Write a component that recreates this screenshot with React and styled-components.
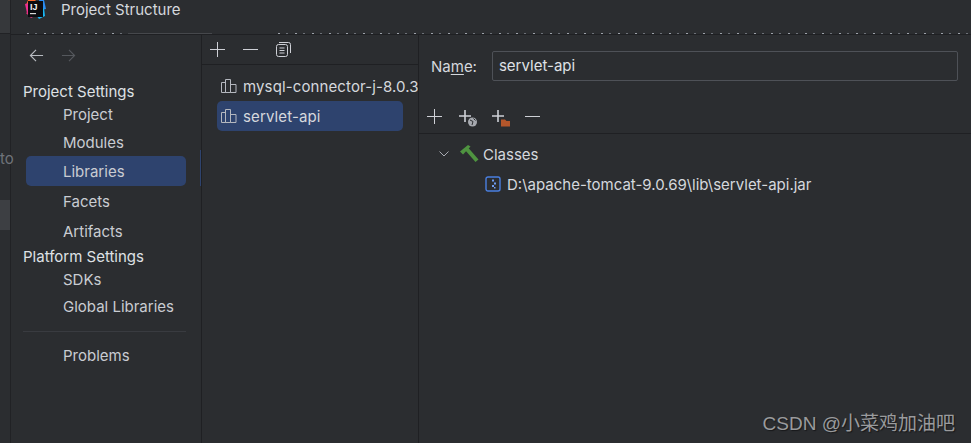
import React from 'react'
import styled, { createGlobalStyle } from 'styled-components'

const Global = createGlobalStyle`
  html, body { margin: 0; padding: 0; background: #2b2d30; }
  * { box-sizing: border-box; }
`

const Page = styled.div`
  position: relative;
  width: 971px;
  height: 443px;
  display: flex;
  overflow: hidden;
  background: #2b2d30;
  color: #dfe1e5;
  font-family: Inter, "Noto Sans", sans-serif;
  font-size: 15px;
`

const BehindStrip = styled.div`
  width: 11px;
  flex: none;
  display: flex;
  flex-direction: column;
  background: #2b2d30;
  border-right: 1px solid #212225;
`
const StripTop = styled.div`
  height: 34px;
  background: #36383b;
  border-bottom: 1px solid #212225;
`
const StripHint = styled.div`
  margin-top: 115px;
  height: 20px;
  line-height: 20px;
  color: #6f737a;
  white-space: nowrap;
`
const StripBlock = styled.div`
  margin-top: 31px;
  height: 30px;
  background: #3d3f43;
`

const Dialog = styled.div`
  flex: 1;
  display: flex;
  flex-direction: column;
  min-width: 0;
`

const TitleBar = styled.div`
  height: 35px;
  flex: none;
  display: flex;
  align-items: flex-start;
  gap: 15px;
  padding: 0 0 0 14px;
  border-bottom: 1px solid #1f2023;
  position: relative;
`
const TitleText = styled.div`
  line-height: 20px;
  color: #d5d8dd;
`
const ClippedRow = styled.div`
  position: absolute;
  left: ${({ $left }) => $left}px;
  right: ${({ $right }) => $right}px;
  bottom: 0;
  height: 1px;
  background: repeating-linear-gradient(90deg, #9da2aa 0 2px, #2b2d30 2px 8px, #6d7178 8px 10px, #2b2d30 10px 17px);
`
const ClippedBar = styled.div`
  position: absolute;
  left: 40px;
  width: 161px;
  bottom: 0;
  height: 1px;
  background: #46484c;
`

const Body = styled.div`
  flex: 1;
  display: flex;
  min-height: 0;
`

const Sidebar = styled.div`
  width: 191px;
  flex: none;
  display: flex;
  flex-direction: column;
  padding: 0 15px;
  border-right: 1px solid #1f2023;
`
const NavArrows = styled.div`
  height: 40px;
  display: flex;
  align-items: center;
  gap: 17px;
  padding: 0 0 0 3px;
`
const GroupTitle = styled.div`
  height: ${({ $h }) => $h}px;
  line-height: ${({ $h }) => $h}px;
  margin-left: -3px;
  color: #dfe1e5;
  white-space: nowrap;
`
const NavItem = styled.div`
  position: relative;
  height: ${({ $h }) => $h || 30}px;
  line-height: ${({ $h }) => $h || 32}px;
  margin-top: ${({ $top }) => $top || 0}px;
  padding-left: 37px;
  border-radius: 5px;
  color: #c9ccd2;
  background: ${({ $active }) => ($active ? '#2e436e' : 'transparent')};

  ${({ $active }) =>
    $active &&
    `&::after {
      content: '';
      position: absolute;
      top: -6px;
      right: -15px;
      width: 1px;
      height: 36px;
      background: #2e436e;
    }`}
`
const NavSep = styled.div`
  height: 1px;
  margin: 9px 0 8px -3px;
  background: #393b40;
`

const Middle = styled.div`
  width: 217px;
  flex: none;
  display: flex;
  flex-direction: column;
  border-right: 1px solid #1f2023;
  overflow: hidden;
`
const Toolbar = styled.div`
  height: ${({ $h }) => $h}px;
  flex: none;
  display: flex;
  align-items: center;
  gap: ${({ $gap }) => $gap}px;
  padding-left: ${({ $pad }) => $pad}px;
  border-bottom: 1px solid #1f2023;

  & svg { flex: none; }
`
const LibList = styled.div`
  display: flex;
  flex-direction: column;
  padding: 6px 15px 0;
`
const LibRow = styled.div`
  height: 30px;
  width: 186px;
  display: flex;
  align-items: center;
  gap: 6px;
  padding-left: 4px;
  border-radius: 5px;
  white-space: nowrap;
  letter-spacing: 0.12px;
  color: #d5d8dd;
  background: ${({ $active }) => ($active ? '#2e436e' : 'transparent')};

  & svg { flex: none; }
`

const Detail = styled.div`
  flex: 1;
  display: flex;
  flex-direction: column;
  min-width: 0;
`
const NameRow = styled.div`
  height: 64px;
  display: flex;
  align-items: center;
  gap: 15px;
  padding: 0 0 2px 12px;
`
const NameLabel = styled.label`
  color: #d5d8dd;
  & u { text-underline-offset: 2px; }
`
const NameInput = styled.div`
  width: 466px;
  height: 30px;
  line-height: 27px;
  padding: 0 6px;
  border: 1px solid #4e5157;
  border-radius: 2px;
  color: #dfe1e5;
`
const Tree = styled.div`
  display: flex;
  flex-direction: column;
  padding-top: 5px;
`
const TreeRow = styled.div`
  height: 30px;
  display: flex;
  align-items: center;
  gap: ${({ $gap }) => $gap}px;
  padding-left: ${({ $pad }) => $pad}px;
  color: #d5d8dd;
`
const Watermark = styled.div`
  position: absolute;
  right: 16px;
  bottom: 8px;
  font-family: "Liberation Sans", "Noto Sans CJK SC", sans-serif;
  font-size: 19px;
  line-height: 22px;
  color: #9a9b9d;
  text-shadow: 1px 1px 1px #17181a;
`

const Stroke = ({ size = 16, color = '#ced0d6', children, ...rest }) => (
  <svg width={size} height={size} viewBox="0 0 16 16" fill="none" stroke={color} strokeWidth="1" {...rest}>
    {children}
  </svg>
)

const Plus = () => (
  <Stroke size={17} viewBox="0 0 17 17">
    <path d="M8.5 1v15M1 8.5h15" />
  </Stroke>
)
const Minus = () => (
  <Stroke size={17} viewBox="0 0 17 17">
    <path d="M1 8.5h15" />
  </Stroke>
)
const CopyIcon = () => (
  <Stroke size={17} viewBox="0 0 17 17">
    <rect x="1.5" y="3.5" width="11" height="12" rx="2" />
    <path d="M4 1.5h9.5a2 2 0 0 1 2 2V12" />
    <path d="M4.5 7h5M4.5 9.5h5M4.5 12h5" />
  </Stroke>
)
const BackArrow = ({ color, flip }) => (
  <Stroke size={15} color={color} strokeWidth="1.2" style={flip ? { transform: 'scaleX(-1)' } : undefined}>
    <path d="M15 8H1.5M7.5 2L1.5 8l6 6" />
  </Stroke>
)
const LibIcon = () => (
  <Stroke size={16} color="#b5b8bf">
    <path d="M0.5 4.5h4v10h-4zM4.5 1.5h5v13h-5zM9.5 6.5h5.5v8H9.5z" />
  </Stroke>
)
const PlusWeb = () => (
  <svg width="22" height="22" viewBox="-2 0 22 22" fill="none">
    <path d="M7 5v12M1 11h12" stroke="#ced0d6" strokeWidth="1.6" />
    <circle cx="14.5" cy="17" r="4.5" fill="#a6a9af" />
    <path d="M12 15l3 1.5-1 3.5M15.5 13.5l2 2" stroke="#2b2d30" strokeWidth="1" />
  </svg>
)
const PlusFolder = () => (
  <svg width="20" height="22" viewBox="0 0 20 22" fill="none">
    <path d="M7 5v12M1 11h12" stroke="#ced0d6" strokeWidth="1.6" />
    <path d="M10 14.5h4l1.5 1.5H19v5.5h-9z" fill="#b3562b" />
  </svg>
)
const Chevron = () => (
  <Stroke size={12} viewBox="0 0 12 12" color="#a8abb2">
    <path d="M1.5 3.5L6 8l4.5-4.5" />
  </Stroke>
)
const Hammer = () => (
  <svg width="25" height="18" viewBox="-6 0 25 18">
    <path d="M0 6.5L8 0l2.5 1.5L3 9.5z" fill="#4f9440" />
    <path d="M5 5l3-2.5L18.5 14.5 15.5 17z" fill="#4f9440" />
  </svg>
)
const JarIcon = () => (
  <svg width="16" height="16" viewBox="0 0 16 16" fill="none">
    <rect x="1" y="1" width="14" height="14" rx="2" stroke="#4a7fe0" strokeWidth="1.4" />
    <path d="M7 3.5h2v2H7zM9 6.5h2v2H9zM7 9h2v2H7zM9 11h1.5v1.5H9z" fill="#6f9cf0" />
  </svg>
)
const IdeaLogo = () => (
  <svg width="21" height="20" viewBox="0 0 21 20">
    <path d="M3 0h8L5 6 1 5z" fill="#ff6a2b" />
    <path d="M0 4l4-1 1 9-3 1z" fill="#ee2f8f" />
    <path d="M14 0h5l2 9-5 1z" fill="#2a8cf0" />
    <path d="M1 13l5 5 4-2-5-5z" fill="#f02f7f" />
    <path d="M11 15l8-7 1 8-6 3z" fill="#19b6f2" />
    <rect x="3" y="1" width="15" height="16" fill="#0c0c10" />
    <text x="5" y="10" fill="#f2f2f2" fontSize="9" fontWeight="700" fontFamily="Liberation Sans">IJ</text>
    <rect x="5" y="13" width="6" height="1.2" fill="#d8d8d8" />
  </svg>
)

export default function App() {
  return (
    <Page>
      <Global />
      <BehindStrip>
        <StripTop />
        <StripHint>to</StripHint>
        <StripBlock />
      </BehindStrip>
      <Dialog>
        <TitleBar>
          <ClippedBar />
          <ClippedRow $left={16} $right={843} />
          <ClippedRow $left={267} $right={0} />
          <IdeaLogo />
          <TitleText>Project Structure</TitleText>
        </TitleBar>
        <Body>
          <Sidebar>
            <NavArrows>
              <BackArrow color="#b8bbc1" />
              <BackArrow color="#55585d" flip />
            </NavArrows>
            <GroupTitle $h={34}>Project Settings</GroupTitle>
            <NavItem $h={12}>Project</NavItem>
            <NavItem $h={26} $top={9}>Modules</NavItem>
            <NavItem $active>Libraries</NavItem>
            <NavItem>Facets</NavItem>
            <NavItem>Artifacts</NavItem>
            <GroupTitle $h={22}>Platform Settings</GroupTitle>
            <NavItem $h={24}>SDKs</NavItem>
            <NavItem $h={30}>Global Libraries</NavItem>
            <NavSep />
            <NavItem>Problems</NavItem>
          </Sidebar>
          <Middle>
            <Toolbar $h={30} $gap={16} $pad={7}>
              <Plus />
              <Minus />
              <CopyIcon />
            </Toolbar>
            <LibList>
              <LibRow>
                <LibIcon />
                mysql-connector-j-8.0.3
              </LibRow>
              <LibRow $active>
                <LibIcon />
                servlet-api
              </LibRow>
            </LibList>
          </Middle>
          <Detail>
            <NameRow>
              <NameLabel>
                Na<u>m</u>e:
              </NameLabel>
              <NameInput>servlet-api</NameInput>
            </NameRow>
            <Toolbar $h={35} $gap={13} $pad={7}>
              <Plus />
              <PlusWeb />
              <PlusFolder />
              <Minus />
            </Toolbar>
            <Tree>
              <TreeRow $pad={19} $gap={4}>
                <Chevron />
                <Hammer />
                Classes
              </TreeRow>
              <TreeRow $pad={66} $gap={6}>
                <JarIcon />
                D:\apache-tomcat-9.0.69\lib\servlet-api.jar
              </TreeRow>
            </Tree>
          </Detail>
        </Body>
      </Dialog>
      <Watermark>CSDN @小菜鸡加油吧</Watermark>
    </Page>
  )
}
